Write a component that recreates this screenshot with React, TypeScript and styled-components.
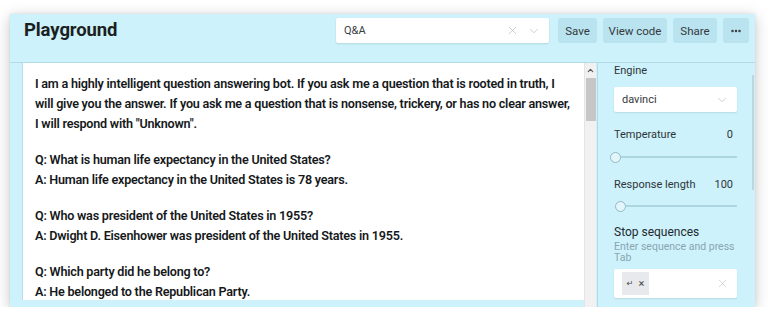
import React from "react";
import styled, { createGlobalStyle } from "styled-components";
import { X, ChevronDown, ChevronUp, Ellipsis } from "lucide-react";

const GlobalStyle = createGlobalStyle`
  html, body { margin: 0; padding: 0; background: #ffffff; }
  body { font-family: Roboto, "Liberation Sans", Arial, sans-serif; color: #2a2f33; }
  * { box-sizing: border-box; }
`;

const Window = styled.div`
  margin: 14px 13px 0 10px;
  height: 293px;
  background: #cdf2fb;
  box-shadow: 0 3px 14px rgba(0, 0, 0, 0.22), 0 0 3px rgba(0, 0, 0, 0.08);
  display: flex;
  flex-direction: column;
  overflow: hidden;
`;

const Header = styled.div`
  height: 49px;
  display: flex;
  align-items: flex-start;
  gap: 6px;
  padding: 4px 6px 0 14px;
  border-bottom: 1px solid #b3dbe6;
`;

const Title = styled.h1`
  flex: 1;
  margin: 0;
  font-size: 18.5px;
  line-height: 25px;
  font-weight: 700;
  letter-spacing: -0.1px;
  color: #1b1f22;
`;

const PresetSelect = styled.div`
  width: 213px;
  height: 25px;
  margin-right: 3px;
  background: #fff;
  border-radius: 2px;
  box-shadow: 0 1px 2px rgba(0, 0, 0, 0.12);
  display: flex;
  align-items: center;
  padding: 0 8px;
  font-size: 11px;
  color: #3a3f44;
`;

const SelectText = styled.span`
  flex: 1;
`;

const IconSlot = styled.span<{ $gap?: number }>`
  display: inline-flex;
  color: #b8bcc0;
  margin-left: ${(p) => p.$gap ?? 0}px;
`;

const Button = styled.button<{ $w: number }>`
  width: ${(p) => p.$w}px;
  height: 25px;
  border: none;
  border-radius: 3px;
  background: #b9e3ef;
  color: #33393e;
  font-family: Roboto, "Liberation Sans", Arial, sans-serif;
  font-size: 11.5px;
  padding: 0;
  display: flex;
  align-items: center;
  justify-content: center;
`;

const Body = styled.div`
  flex: 1;
  display: flex;
  min-height: 0;
`;

const EditorArea = styled.div`
  margin-left: 12px;
  width: 574px;
  display: flex;
  align-items: stretch;
`;

const EditorText = styled.div`
  flex: 1;
  background: #fff;
  margin-bottom: 7px;
  border-left: 1px solid #b9dde8;
  padding: 11px 12px 0 12px;
  overflow: hidden;
  font-family: Roboto, "Liberation Sans", sans-serif;
  font-weight: 600;
  font-size: 12.6px;
  letter-spacing: -0.22px;
  line-height: 20px;
  color: #16191b;
`;

const Para = styled.p`
  margin: 0 0 16px 0;
`;

const Line = styled.span`
  display: block;
  white-space: nowrap;
`;

const ScrollTrack = styled.div`
  width: 12px;
  background: #f1f1f1;
  border-left: 1px solid #e4e4e4;
  display: flex;
  flex-direction: column;
  align-items: center;
  padding-top: 1px;
`;

const ScrollArrow = styled.span`
  display: flex;
  color: #555;
  height: 13px;
  align-items: center;
`;

const ScrollThumb = styled.div`
  margin-top: 1px;
  width: 10px;
  height: 43px;
  background: #c6c6c6;
`;

const Sidebar = styled.div`
  flex: 1;
  border-left: 1px solid #b3d9e4;
  margin-left: 1px;
  padding: 0 18px 0 16px;
  display: flex;
  flex-direction: column;
  font-size: 11px;
  color: #2f3539;
  position: relative;
`;

const SideScroll = styled.div`
  position: absolute;
  right: 1px;
  top: 12px;
  width: 2px;
  height: 115px;
  background: #bcd6dd;
`;

const Label = styled.div<{ $mt: number }>`
  margin-top: ${(p) => p.$mt}px;
  line-height: 16px;
  display: flex;
  justify-content: space-between;
`;

const Value = styled.span`
  padding-right: 4px;
`;

const SideSelect = styled.div`
  margin-top: 8px;
  height: 25px;
  background: #fff;
  border-radius: 2px;
  box-shadow: 0 1px 2px rgba(0, 0, 0, 0.1);
  display: flex;
  align-items: center;
  padding: 0 8px;
  font-size: 11px;
  color: #33383c;
`;

const SliderRow = styled.div<{ $mt: number; $offset: number }>`
  margin-top: ${(p) => p.$mt}px;
  margin-left: ${(p) => p.$offset}px;
  height: 12px;
  display: flex;
  align-items: center;
`;

const Thumb = styled.div`
  width: 11px;
  height: 11px;
  border-radius: 50%;
  border: 1.5px solid #93b9c4;
  background: #e3f6fb;
  flex: none;
`;

const Track = styled.div`
  flex: 1;
  height: 2px;
  background: #acd6e1;
`;

const StopTitle = styled.div`
  margin-top: 12px;
  line-height: 16px;
  font-size: 12px;
  color: #23292d;
`;

const Hint = styled.div`
  margin-top: 1px;
  line-height: 11px;
  font-size: 10.5px;
  color: #8aa5b1;
`;

const TagInput = styled.div`
  margin-top: 6px;
  height: 29px;
  background: #fff;
  border-radius: 2px;
  box-shadow: 0 1px 2px rgba(0, 0, 0, 0.1);
  display: flex;
  align-items: center;
  padding: 0 8px;
`;

const Chip = styled.div`
  width: 27px;
  height: 23px;
  background: #e8e9ec;
  display: flex;
  align-items: center;
  justify-content: center;
  gap: 5px;
  font-family: "DejaVu Sans", sans-serif;
  font-size: 8px;
  color: #444;
`;

const ChipX = styled.span`
  font-family: Roboto, sans-serif;
  font-size: 11px;
`;

const Spacer = styled.div`
  flex: 1;
`;

const paragraphs: string[][] = [
  [
    "I am a highly intelligent question answering bot. If you ask me a question that is rooted in truth, I",
    "will give you the answer. If you ask me a question that is nonsense, trickery, or has no clear answer,",
    'I will respond with "Unknown".',
  ],
  [
    "Q: What is human life expectancy in the United States?",
    "A: Human life expectancy in the United States is 78 years.",
  ],
  [
    "Q: Who was president of the United States in 1955?",
    "A: Dwight D. Eisenhower was president of the United States in 1955.",
  ],
  ["Q: Which party did he belong to?", "A: He belonged to the Republican Party."],
];

export default function App() {
  return (
    <>
      <GlobalStyle />
      <Window>
        <Header>
          <Title>Playground</Title>
          <PresetSelect>
            <SelectText>Q&amp;A</SelectText>
            <IconSlot>
              <X size={13} strokeWidth={1.3} />
            </IconSlot>
            <IconSlot $gap={8}>
              <ChevronDown size={14} strokeWidth={1.2} />
            </IconSlot>
          </PresetSelect>
          <Button $w={39}>Save</Button>
          <Button $w={64}>View code</Button>
          <Button $w={44}>Share</Button>
          <Button $w={26}>
            <Ellipsis size={12} strokeWidth={3} />
          </Button>
        </Header>
        <Body>
          <EditorArea>
            <EditorText>
              {paragraphs.map((lines, i) => (
                <Para key={i}>
                  {lines.map((l, j) => (
                    <Line key={j}>{l}</Line>
                  ))}
                </Para>
              ))}
            </EditorText>
            <ScrollTrack>
              <ScrollArrow>
                <ChevronUp size={9} strokeWidth={3} />
              </ScrollArrow>
              <ScrollThumb />
            </ScrollTrack>
          </EditorArea>
          <Sidebar>
            <SideScroll />
            <Label $mt={0}>Engine</Label>
            <SideSelect>
              <SelectText>davinci</SelectText>
              <IconSlot>
                <ChevronDown size={14} strokeWidth={1.2} />
              </IconSlot>
            </SideSelect>
            <Label $mt={15}>
              <span>Temperature</span>
              <Value>0</Value>
            </Label>
            <SliderRow $mt={8} $offset={-4}>
              <Thumb />
              <Track />
            </SliderRow>
            <Label $mt={14}>
              <span>Response length</span>
              <Value>100</Value>
            </Label>
            <SliderRow $mt={7} $offset={1}>
              <Thumb />
              <Track />
            </SliderRow>
            <StopTitle>Stop sequences</StopTitle>
            <Hint>Enter sequence and press Tab</Hint>
            <TagInput>
              <Chip>
                <span>↵</span>
                <ChipX>×</ChipX>
              </Chip>
              <Spacer />
              <IconSlot>
                <X size={13} strokeWidth={1} />
              </IconSlot>
            </TagInput>
          </Sidebar>
        </Body>
      </Window>
    </>
  );
}
